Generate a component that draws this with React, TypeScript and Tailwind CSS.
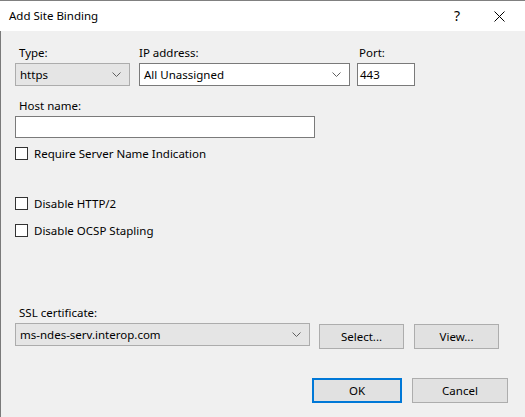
import type { ReactNode } from 'react'

const font = { fontFamily: '"Segoe UI", "Noto Sans", "Open Sans", sans-serif' }

function Chevron() {
  return (
    <svg width="9" height="6" viewBox="0 0 9 6" className="shrink-0">
      <path d="M0.5 0.5 L4.5 4.5 L8.5 0.5" fill="none" stroke="#606060" strokeWidth="1" />
    </svg>
  )
}

function Combo({ value, className, white }: { value: string; className: string; white?: boolean }) {
  return (
    <div
      className={`flex h-[23px] items-center justify-between border pr-[8px] pl-[4px] ${
        white ? 'border-[#7a7a7a] bg-white' : 'border-[#acacac] bg-[#e5e5e5]'
      } ${className}`}
    >
      <span className="leading-4">{value}</span>
      <Chevron />
    </div>
  )
}

function Button({ children, className, primary }: { children: ReactNode; className: string; primary?: boolean }) {
  return (
    <button
      className={`flex h-[25px] items-center justify-center bg-[#e1e1e1] leading-4 ${
        primary ? 'border-2 border-[#0078d7]' : 'border border-[#adadad]'
      } ${className}`}
    >
      {children}
    </button>
  )
}

function Check({ label, className }: { label: string; className?: string }) {
  return (
    <label className={`flex h-[13px] items-center ${className ?? ''}`}>
      <span className="h-[13px] w-[13px] border border-[#333333] bg-white" />
      <span className="ml-[6px] leading-4">{label}</span>
    </label>
  )
}

export default function App() {
  return (
    <div className="h-[417px] w-[525px] overflow-hidden text-[11.5px] text-black" style={font}>
      <div className="flex h-[31px] items-center border-t border-[#808080] bg-white pl-[9px]">
        <span className="flex-1 leading-4">Add Site Binding</span>
        <span className="mr-[34px] text-[14px] leading-4">?</span>
        <svg width="11" height="11" viewBox="0 0 11 11" className="mr-[20px]">
          <path d="M0.5 0.5 L10.5 10.5 M10.5 0.5 L0.5 10.5" stroke="#000" strokeWidth="1" />
        </svg>
      </div>

      <div className="flex h-[386px] flex-col border-l border-[#7a7a7a] bg-[#f0f0f0] pt-[14px] pl-[14px]">
        <div className="flex">
          <div className="flex w-[115px] flex-col">
            <span className="mb-[2px] pl-[4px] leading-4">Type:</span>
            <Combo value="https" className="w-[115px]" />
          </div>
          <div className="ml-[9px] flex w-[211px] flex-col">
            <span className="mb-[2px] leading-4">IP address:</span>
            <Combo value="All Unassigned" className="w-[211px]" white />
          </div>
          <div className="ml-[7px] flex flex-col">
            <span className="mb-[2px] pl-[2px] leading-4">Port:</span>
            <div className="flex h-[23px] w-[58px] items-center border border-[#7a7a7a] bg-white pl-[2px]">
              <span className="leading-4">443</span>
            </div>
          </div>
        </div>

        <span className="mt-[12px] mb-[2px] pl-[4px] leading-4">Host name:</span>
        <div className="h-[22px] w-[300px] border border-[#7a7a7a] bg-white" />

        <Check label="Require Server Name Indication" className="mt-[9px]" />
        <Check label="Disable HTTP/2" className="mt-[37px]" />
        <Check label="Disable OCSP Stapling" className="mt-[14px]" />

        <span className="mt-[68px] mb-[2px] pl-[4px] leading-4">SSL certificate:</span>
        <div className="flex items-start">
          <Combo value="ms-ndes-serv.interop.com" className="w-[295px]" />
          <Button className="ml-[9px] w-[85px] mt-[1px]">Select...</Button>
          <Button className="ml-[10px] w-[85px] mt-[1px]">View...</Button>
        </div>

        <div className="mt-[29px] flex">
          <Button className="ml-[297px] w-[90px]" primary>
            OK
          </Button>
          <Button className="ml-[10px] w-[96px]">Cancel</Button>
        </div>
      </div>
    </div>
  )
}
